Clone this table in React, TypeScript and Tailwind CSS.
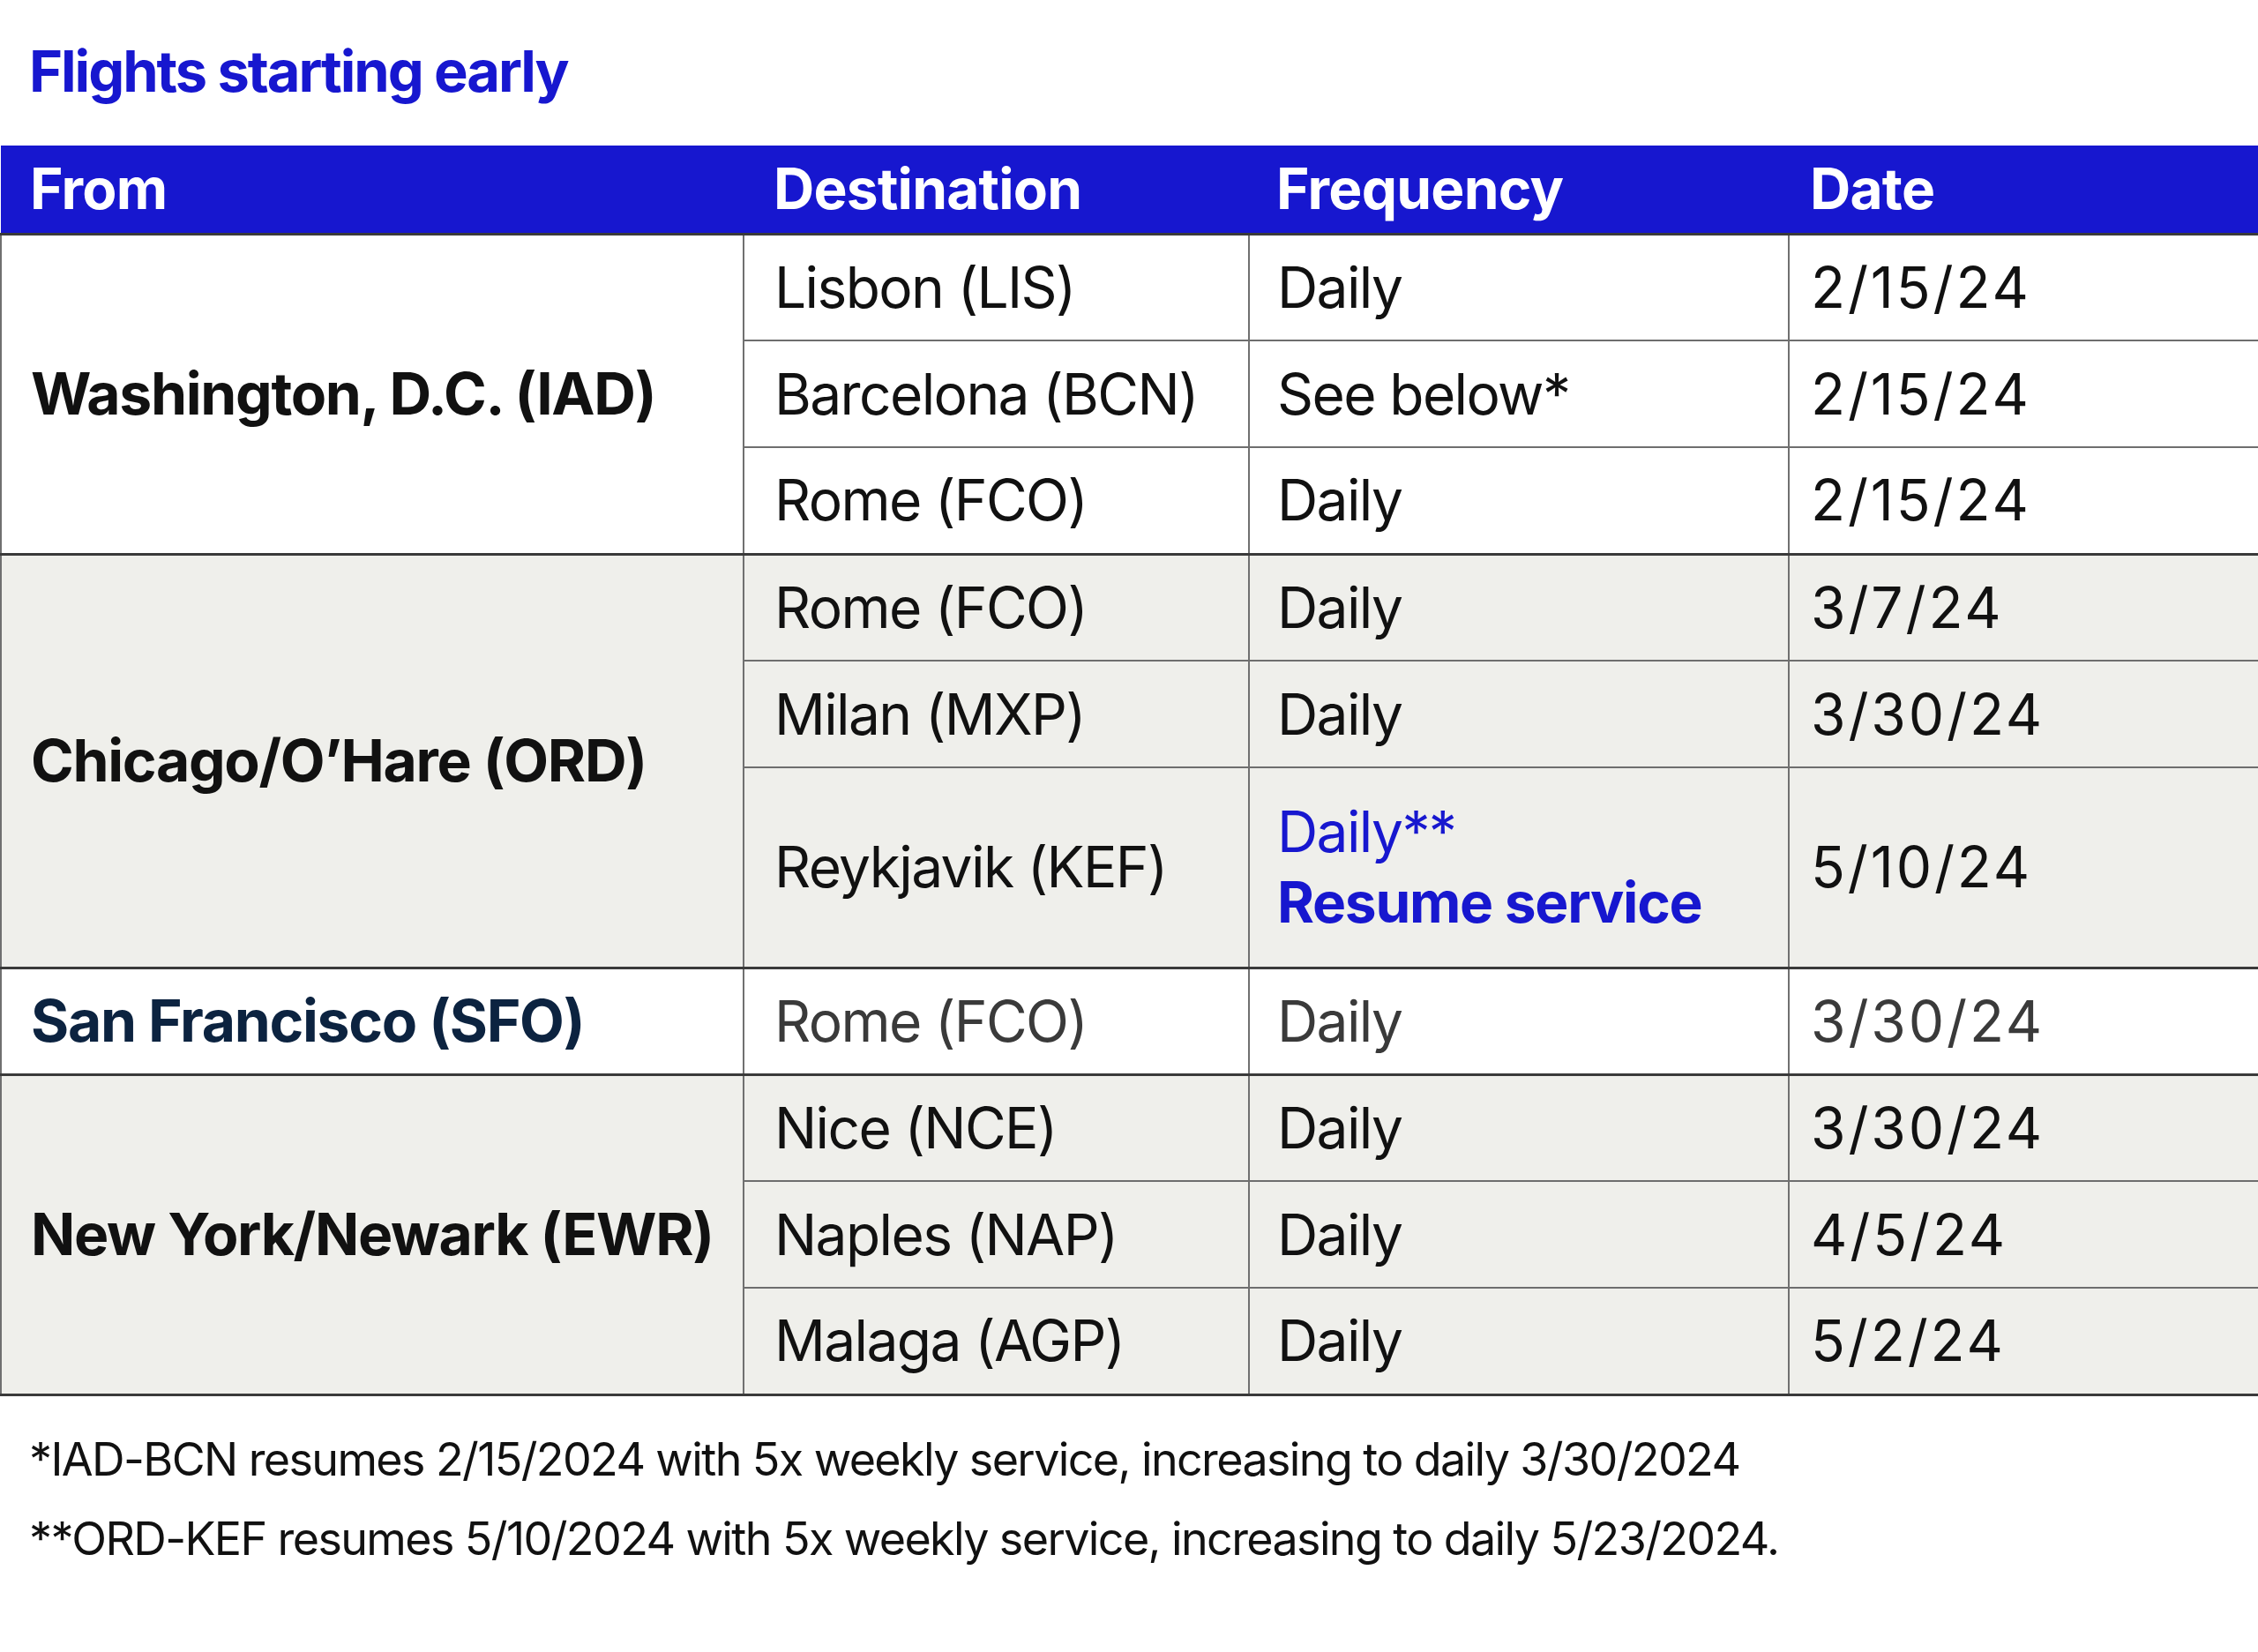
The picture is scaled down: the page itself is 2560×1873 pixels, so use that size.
import React from "react";

type Row = { dest: string; freq: React.ReactNode; date: string };
type Group = { from: string; rows: Row[]; shaded: boolean; fromClass?: string; muted?: boolean };

const groups: Group[] = [
  {
    from: "Washington, D.C. (IAD)",
    shaded: false,
    rows: [
      { dest: "Lisbon (LIS)", freq: "Daily", date: "2/15/24" },
      { dest: "Barcelona (BCN)", freq: "See below*", date: "2/15/24" },
      { dest: "Rome (FCO)", freq: "Daily", date: "2/15/24" },
    ],
  },
  {
    from: "Chicago/O\u2019Hare (ORD)",
    shaded: true,
    rows: [
      { dest: "Rome (FCO)", freq: "Daily", date: "3/7/24" },
      { dest: "Milan (MXP)", freq: "Daily", date: "3/30/24" },
      {
        dest: "Reykjavik (KEF)",
        freq: (
          <div className="text-[#1717cf] leading-[80px]">
            <div>Daily**</div>
            <div className="font-bold tracking-[-0.02em]">Resume service</div>
          </div>
        ),
        date: "5/10/24",
      },
    ],
  },
  {
    from: "San Francisco (SFO)",
    shaded: false,
    fromClass: "text-[#0c2340]",
    muted: true,
    rows: [{ dest: "Rome (FCO)", freq: "Daily", date: "3/30/24" }],
  },
  {
    from: "New York/Newark (EWR)",
    shaded: true,
    rows: [
      { dest: "Nice (NCE)", freq: "Daily", date: "3/30/24" },
      { dest: "Naples (NAP)", freq: "Daily", date: "4/5/24" },
      { dest: "Malaga (AGP)", freq: "Daily", date: "5/2/24" },
    ],
  },
];

const line = "align-middle border-l-2 border-l-[#707070]";

export default function App() {
  return (
    <div
      className="w-[2560px] min-h-[1873px] bg-white text-[#111]"
      style={{ fontFamily: "Inter, 'Liberation Sans', sans-serif" }}
    >
      <h1 className="px-[33px] pt-[34px] pb-[38px] text-[65px] leading-[93px] font-bold tracking-[-0.032em] text-[#1717cf]">
        Flights starting early
      </h1>

      <table className="w-[2560px] table-fixed border-collapse text-[64px] tracking-[-0.025em]">
        <colgroup>
          <col className="w-[842px]" />
          <col className="w-[573px]" />
          <col className="w-[612px]" />
          <col className="w-[533px]" />
        </colgroup>
        <thead>
          <tr className="h-[100px] bg-[#1717cf] text-white text-left tracking-[-0.012em]">
            <th className="px-[33px] font-bold">From</th>
            <th className="px-[34px] font-bold">Destination</th>
            <th className="px-[31px] font-bold">Frequency</th>
            <th className="px-[24px] font-bold">Date</th>
          </tr>
        </thead>
        <tbody>
          {groups.map((g) =>
            g.rows.map((r, i) => {
              const top = i === 0 ? "border-t-[3px] border-t-[#3a3a3a]" : "border-t-2 border-t-[#6e6e6e]";
              const tall = typeof r.freq !== "string";
              return (
                <tr
                  key={g.from + r.dest}
                  className={`${g.shaded ? "bg-[#efefeb]" : "bg-white"} ${tall ? "h-[227px]" : "h-[121px]"} ${
                    g.muted ? "text-[#3a3a3a]" : ""
                  }`}
                >
                  {i === 0 && (
                    <td
                      rowSpan={g.rows.length}
                      className={`px-[33px] align-middle whitespace-nowrap font-bold text-[66px] tracking-[-0.02em] border-t-[3px] border-t-[#3a3a3a] border-l-2 border-l-[#707070] ${
                        g.fromClass ?? "text-[#111]"
                      }`}
                    >
                      {g.from}
                    </td>
                  )}
                  <td className={`px-[34px] ${line} ${top}`}>{r.dest}</td>
                  <td className={`px-[31px] ${line} ${top}`}>{r.freq}</td>
                  <td className={`px-[24px] tracking-[0.045em] ${line} ${top} border-r-2 border-r-[#707070]`}>
                    {r.date}
                  </td>
                </tr>
              );
            })
          )}
          <tr>
            <td colSpan={4} className="border-t-[3px] border-t-[#3a3a3a] h-0 p-0" />
          </tr>
        </tbody>
      </table>

      <div className="px-[33px] pt-[27px] text-[52px] leading-[90px] tracking-[-0.031em] text-[#111]">
        <p>*IAD-BCN resumes 2/15/2024 with 5x weekly service, increasing to daily 3/30/2024</p>
        <p>**ORD-KEF resumes 5/10/2024 with 5x weekly service, increasing to daily 5/23/2024.</p>
      </div>
    </div>
  );
}
